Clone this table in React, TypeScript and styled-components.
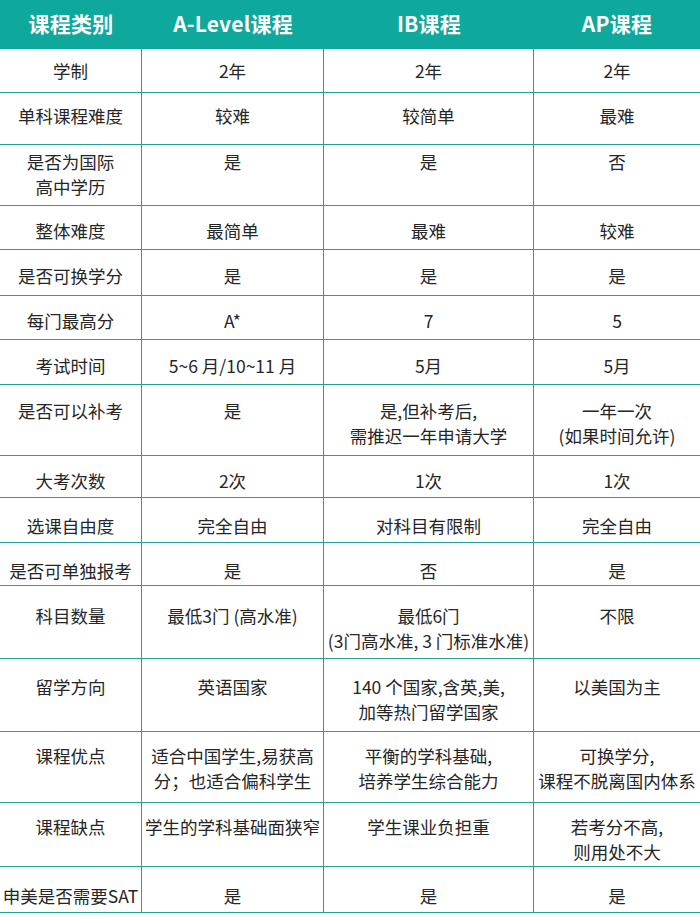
import styled, { createGlobalStyle } from 'styled-components';

const GlobalStyle = createGlobalStyle`
  html, body {
    margin: 0;
    padding: 0;
    background: #ffffff;
  }
  body {
    font-family: "Noto Sans CJK SC", "Noto Sans", sans-serif;
  }
`;

const LINE = '#23a196';
const COLS = '142px 182px 210px 166px';

interface RowData {
  h: number;
  pt: number;
  cells: string[];
}

const header = ['课程类别', 'A-Level课程', 'IB课程', 'AP课程'];

const rows: RowData[] = [
  { h: 44, pt: 9, cells: ['学制', '2年', '2年', '2年'] },
  { h: 52, pt: 10, cells: ['单科课程难度', '较难', '较简单', '最难'] },
  { h: 61, pt: 4, cells: ['是否为国际\n高中学历', '是', '是', '否'] },
  { h: 44, pt: 12, cells: ['整体难度', '最简单', '最难', '较难'] },
  { h: 46, pt: 13, cells: ['是否可换学分', '是', '是', '是'] },
  { h: 44, pt: 12, cells: ['每门最高分', 'A*', '7', '5'] },
  { h: 45, pt: 13, cells: ['考试时间', '5~6 月/10~11 月', '5月', '5月'] },
  {
    h: 71,
    pt: 13,
    cells: ['是否可以补考', '是', '是,但补考后,\n需推迟一年申请大学', '一年一次\n(如果时间允许)'],
  },
  { h: 42, pt: 12, cells: ['大考次数', '2次', '1次', '1次'] },
  { h: 45, pt: 15, cells: ['选课自由度', '完全自由', '对科目有限制', '完全自由'] },
  { h: 43, pt: 15, cells: ['是否可单独报考', '是', '否', '是'] },
  {
    h: 73,
    pt: 17,
    cells: ['科目数量', '最低3门 (高水准)', '最低6门\n(3门高水准, 3 门标准水准)', '不限'],
  },
  {
    h: 73,
    pt: 15,
    cells: ['留学方向', '英语国家', '140 个国家,含英,美,\n加等热门留学国家', '以美国为主'],
  },
  {
    h: 71,
    pt: 11,
    cells: [
      '课程优点',
      '适合中国学生,易获高\n分；也适合偏科学生',
      '平衡的学科基础,\n培养学生综合能力',
      '可换学分,\n课程不脱离国内体系',
    ],
  },
  {
    h: 64,
    pt: 11,
    cells: ['课程缺点', '学生的学科基础面狭窄', '学生课业负担重', '若考分不高,\n则用处不大'],
  },
  { h: 46, pt: 16, cells: ['申美是否需要SAT', '是', '是', '是'] },
];

const Page = styled.div`
  width: 700px;
  overflow: hidden;
`;

const Table = styled.div`
  display: flex;
  flex-direction: column;
  width: 700px;
`;

const HeadRow = styled.div`
  display: grid;
  grid-template-columns: ${COLS};
  height: 49px;
  background: #0ea89d;
`;

const HeadCell = styled.div`
  display: flex;
  align-items: center;
  justify-content: center;
  padding-bottom: 3px;
  color: #ffffff;
  font-size: 21px;
  font-weight: 700;
  letter-spacing: 0.2px;
`;

const Row = styled.div<{ $h: number }>`
  display: grid;
  grid-template-columns: ${COLS};
  height: ${(p) => p.$h}px;
  border-bottom: 1.5px solid ${LINE};
  box-sizing: border-box;
`;

const Cell = styled.div<{ $pt: number; $last: boolean }>`
  box-sizing: border-box;
  padding-top: ${(p) => p.$pt}px;
  border-right: ${(p) => (p.$last ? 'none' : `1.5px solid ${LINE}`)};
  color: #262626;
  font-size: 17.5px;
  line-height: 25px;
  text-align: center;
  white-space: pre;
  display: flex;
  justify-content: center;
  overflow: visible;
`;

export default function App() {
  return (
    <Page>
      <GlobalStyle />
      <Table>
        <HeadRow>
          {header.map((t) => (
            <HeadCell key={t}>{t}</HeadCell>
          ))}
        </HeadRow>
        {rows.map((r, i) => (
          <Row key={i} $h={r.h}>
            {r.cells.map((c, j) => (
              <Cell key={j} $pt={r.pt} $last={j === 3}>
                {c}
              </Cell>
            ))}
          </Row>
        ))}
      </Table>
    </Page>
  );
}
